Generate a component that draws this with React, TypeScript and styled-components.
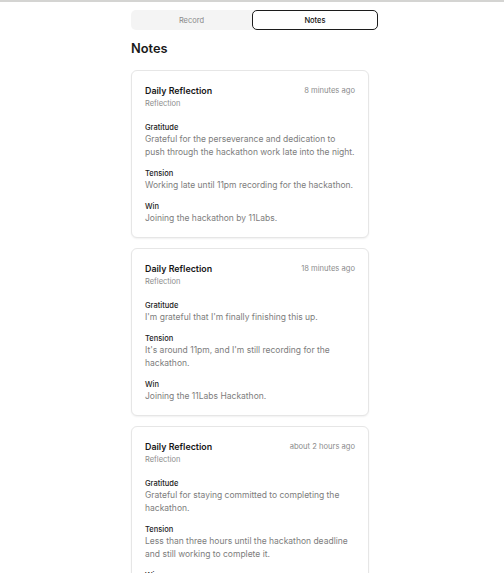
import React from 'react';
import styled, { createGlobalStyle } from 'styled-components';

const GlobalStyle = createGlobalStyle`
	html, body {
		margin: 0;
		padding: 0;
		background: #ffffff;
	}
	body {
		font-family: Inter, "Noto Sans", sans-serif;
		color: #1a1a1a;
		-webkit-font-smoothing: antialiased;
	}
`;

const Page = styled.div`
	border-top: 2px solid #d4d4d2;
	min-height: 571px;
	padding-left: 5px;
	display: flex;
	justify-content: center;
`;

const Column = styled.main`
	width: 247px;
	padding-top: 8px;
	display: flex;
	flex-direction: column;
`;

const Tabs = styled.div`
	display: grid;
	grid-template-columns: 121px 1fr;
	height: 20px;
	background: #f4f4f4;
	border-radius: 5px;
`;

const Tab = styled.button<{ $active?: boolean }>`
	font-family: inherit;
	font-size: 7.5px;
	font-weight: ${(p) => (p.$active ? 500 : 400)};
	color: ${(p) => (p.$active ? '#111' : '#8a8a8a')};
	background: ${(p) => (p.$active ? '#fff' : 'transparent')};
	border: ${(p) => (p.$active ? '1.5px solid #1c1c1c' : 'none')};
	border-radius: 5px;
	padding: 0;
	cursor: pointer;
`;

const Heading = styled.h1`
	font-size: 12.8px;
	font-weight: 600;
	margin: 11px 0 13px;
	line-height: 16px;
`;

const List = styled.div`
	width: 238px;
	display: flex;
	flex-direction: column;
	gap: 10px;
`;

const Card = styled.article`
	border: 1px solid #e6e6e6;
	border-radius: 6px;
	box-shadow: 0 1px 2px rgba(0, 0, 0, 0.06);
	padding: 14px 13px 12px;
	background: #fff;
`;

const CardHeader = styled.div`
	display: flex;
	justify-content: space-between;
	align-items: flex-start;
	margin-bottom: 12px;
`;

const Title = styled.div`
	font-size: 8.9px;
	font-weight: 600;
	line-height: 12px;
	color: #171717;
`;

const Kind = styled.div`
	font-size: 7.5px;
	line-height: 13px;
	color: #8c8c8c;
`;

const Time = styled.div`
	font-size: 7.6px;
	line-height: 12px;
	color: #8c8c8c;
`;

const Section = styled.section`
	& + & {
		margin-top: 9px;
	}
`;

const Label = styled.div`
	font-size: 7.5px;
	font-weight: 500;
	line-height: 11px;
	color: #222;
`;

const Body = styled.p`
	margin: 0;
	font-size: 8.5px;
	line-height: 13px;
	color: #7d7d7d;
`;

type Note = {
	time: string;
	gratitude: string;
	tension: string;
	win: string;
};

const notes: Note[] = [
	{
		time: '8 minutes ago',
		gratitude:
			'Grateful for the perseverance and dedication to push through the hackathon work late into the night.',
		tension: 'Working late until 11pm recording for the hackathon.',
		win: 'Joining the hackathon by 11Labs.',
	},
	{
		time: '18 minutes ago',
		gratitude: "I'm grateful that I'm finally finishing this up.",
		tension: "It's around 11pm, and I'm still recording for the hackathon.",
		win: 'Joining the 11Labs Hackathon.',
	},
	{
		time: 'about 2 hours ago',
		gratitude: 'Grateful for staying committed to completing the hackathon.',
		tension:
			'Less than three hours until the hackathon deadline and still working to complete it.',
		win: 'Finishing the submission before the deadline.',
	},
];

function NoteCard({ note }: { note: Note }) {
	return (
		<Card>
			<CardHeader>
				<div>
					<Title>Daily Reflection</Title>
					<Kind>Reflection</Kind>
				</div>
				<Time>{note.time}</Time>
			</CardHeader>
			<Section>
				<Label>Gratitude</Label>
				<Body>{note.gratitude}</Body>
			</Section>
			<Section>
				<Label>Tension</Label>
				<Body>{note.tension}</Body>
			</Section>
			<Section>
				<Label>Win</Label>
				<Body>{note.win}</Body>
			</Section>
		</Card>
	);
}

export default function App() {
	return (
		<>
			<GlobalStyle />
			<Page>
				<Column>
					<Tabs>
						<Tab>Record</Tab>
						<Tab $active>Notes</Tab>
					</Tabs>
					<Heading>Notes</Heading>
					<List>
						{notes.map((note, index) => (
							<NoteCard key={`note_${index}`} note={note} />
						))}
					</List>
				</Column>
			</Page>
		</>
	);
}
